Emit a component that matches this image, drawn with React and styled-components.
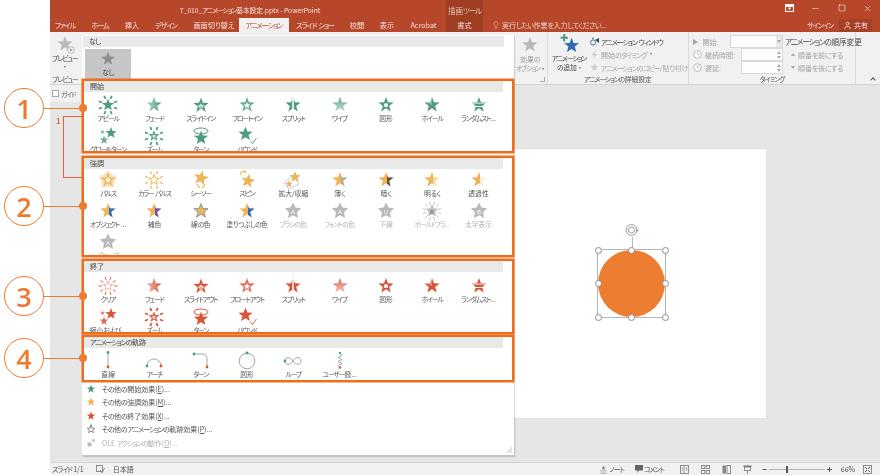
import React, { useId } from "react";
import styled, { createGlobalStyle } from "styled-components";
import { Lightbulb, User, X, Minus, Square } from "lucide-react";

const GlobalStyle = createGlobalStyle`
  html, body {
    margin: 0;
    padding: 0;
    background: #fff;
    overflow: hidden;
  }
  * {
    box-sizing: border-box;
  }
  body {
    font-family: "Noto Sans CJK JP", "Noto Sans", sans-serif;
    font-feature-settings: "palt";
  }
`;

const GREEN = "#4f9c82";
const YELLOW = "#edb557";
const RED = "#d9553a";
const BLUE = "#2f6db0";
const GREY = "#b9b9b9";
const ORANGE = "#ef6c1a";
const CALLOUT = "#ee7a2d";

const Page = styled.div`
  position: relative;
  width: 880px;
  height: 475px;
  overflow: hidden;
  padding-left: 50px;
  background: #fff;
  filter: blur(0.3px);
`;

const Window = styled.div`
  display: flex;
  flex-direction: column;
  width: 830px;
  height: 475px;
  background: #e6e6e6;
`;

/* the UI font in the screenshot has narrow kana */
const Kana = styled.span`
  letter-spacing: ${(p) => (p.$kata ? "-1.1px" : "-0.55px")};
`;

function T({ children }) {
  const parts = String(children).match(/[ァ-ヶー]+|[ぁ-ん]+|[^ァ-ヶーぁ-ん]+/g) || [];
  return parts.map((part, i) => {
    if (/^[ァ-ヶー]/.test(part)) return <Kana key={i} $kata>{part}</Kana>;
    if (/^[ぁ-ん]/.test(part)) return <Kana key={i}>{part}</Kana>;
    return part;
  });
}

/* title + tabs */
const Header = styled.div`
  background: #b7472a;
  color: #f5e4de;
  height: 32px;
  flex: none;
`;

const TitleRow = styled.div`
  display: flex;
  height: 18px;
`;

const Title = styled.div`
  width: 396px;
  padding: 1px 0 0 4px;
  text-align: center;
  font-size: 6.7px;
  line-height: 18px;
  white-space: nowrap;
`;

const ContextLabel = styled.div`
  width: 37px;
  background: #a03e24;
  color: #e9c4b8;
  font-size: 7.5px;
  line-height: 21px;
  text-align: center;
`;

const WindowButtons = styled.div`
  display: flex;
  margin-left: auto;
`;

const WindowButton = styled.div`
  display: flex;
  width: 26.5px;
  height: 16px;
  align-items: center;
  justify-content: center;
  &:last-child {
    width: 24.5px;
  }
`;

const TabRow = styled.div`
  display: flex;
  height: 14px;
  align-items: stretch;
`;

const Tab = styled.div`
  width: ${(p) => p.$w}px;
  font-size: 7.2px;
  line-height: 15px;
  text-align: center;
  white-space: nowrap;
  background: ${(p) => (p.$active ? "#f1f1f1" : p.$context ? "#a03e24" : "transparent")};
  color: ${(p) => (p.$active ? "#b7472a" : "#f5e4de")};
`;

const Hint = styled.div`
  display: flex;
  align-items: center;
  gap: 2px;
  padding-left: 9px;
  font-size: 7px;
  color: #ecd3ca;
  white-space: nowrap;
`;

const Account = styled.div`
  display: flex;
  align-items: center;
  margin-left: auto;
  padding-right: 8px;
  font-size: 7px;
`;

const SignIn = styled.span`
  margin-right: 6px;
`;

const Share = styled.div`
  display: flex;
  align-items: center;
  justify-content: center;
  gap: 2px;
  width: 33px;
  height: 13px;
  background: #a53f25;
`;

/* ribbon */
const Ribbon = styled.div`
  display: flex;
  flex: none;
  height: 53px;
  background: #f1f1f1;
  border-bottom: 1px solid #d2d2d2;
  color: #444;
`;

const Group = styled.div`
  position: relative;
  display: flex;
  flex-direction: column;
  flex: none;
  width: ${(p) => p.$w}px;
  border-right: ${(p) => (p.$plain ? "none" : "1px solid #dadada")};
`;

const GroupBody = styled.div`
  display: flex;
  flex: 1;
  min-height: 0;
  justify-content: ${(p) => p.$justify || "flex-start"};
`;

const GroupLabel = styled.div`
  flex: none;
  height: 9px;
  font-size: 6.8px;
  line-height: 9px;
  text-align: center;
  color: #555;
  white-space: nowrap;
`;

const Launcher = styled.div`
  position: absolute;
  right: 2px;
  bottom: 2px;
  width: 5px;
  height: 5px;
  border-right: 1px solid #aaa;
  border-bottom: 1px solid #aaa;
`;

const BigButton = styled.div`
  display: flex;
  flex-direction: column;
  align-items: center;
  width: ${(p) => p.$w}px;
  padding-top: ${(p) => p.$top || 3}px;
  font-size: 6.8px;
  line-height: 9px;
  text-align: center;
  white-space: nowrap;
  color: ${(p) => (p.$disabled ? "#9a9a9a" : "#444")};
`;

const Caret = styled.span`
  display: inline-block;
  width: 0;
  height: 0;
  margin: ${(p) => (p.$block ? "3px 0 0" : "0 0 1px 2px")};
  border-left: 1.5px solid transparent;
  border-right: 1.5px solid transparent;
  border-top: 2px solid #777;
`;

const CommandColumn = styled.div`
  display: flex;
  flex-direction: column;
  padding-top: 3px;
  padding-left: ${(p) => p.$left || 0}px;
  width: ${(p) => p.$w}px;
`;

const CommandRow = styled.div`
  display: flex;
  align-items: center;
  gap: 2px;
  height: 13px;
  font-size: ${(p) => p.$size || 7}px;
  white-space: nowrap;
  color: ${(p) => (p.$disabled ? "#a6a6a6" : "#444")};
`;

const OrderRow = styled(CommandRow)`
  padding-left: 6px;
  gap: 3px;
`;

const FieldLabel = styled.span`
  flex: 1;
  padding-left: 1px;
`;

const Field = styled.div`
  display: flex;
  justify-content: flex-end;
  align-items: center;
  flex: none;
  width: ${(p) => p.$w}px;
  height: 12.5px;
  background: #fdfdfd;
  border: 1px solid #d8d8d8;
`;

const FieldEnd = styled.div`
  display: flex;
  flex-direction: column;
  align-items: center;
  justify-content: center;
  gap: 2px;
  width: 6px;
  height: 100%;
  background: ${(p) => (p.$shade ? "#e8e8e8" : "transparent")};
`;

const Tri = styled.span`
  display: inline-block;
  flex: none;
  width: 0;
  height: 0;
  border-style: solid;
  border-color: transparent;
  ${(p) =>
    p.$dir === "up"
      ? "border-width: 0 2.5px 3px; border-bottom-color: #a9a9a9;"
      : p.$dir === "right"
        ? "border-width: 3px 0 3px 5px; border-left-color: #a9a9a9;"
        : "border-width: 3px 2.5px 0; border-top-color: #a9a9a9;"}
`;

const CollapseArrow = styled.div`
  margin-left: auto;
  margin-right: 5px;
  margin-top: 46px;
  width: 4px;
  height: 4px;
  border-left: 1px solid #555;
  border-top: 1px solid #555;
  transform: rotate(45deg);
`;

/* work area */
const Workspace = styled.div`
  display: flex;
  flex: 1;
  min-height: 0;
  padding-right: 114px;
`;

const Sidebar = styled.div`
  flex: none;
  width: 30px;
`;

const GuideBar = styled.div`
  display: flex;
  align-items: center;
  gap: 2px;
  height: 17px;
  padding-left: 2px;
  background: #f1f1f1;
  font-size: 6.8px;
  color: #666;
`;

const GuideBox = styled.span`
  width: 7px;
  height: 7px;
  background: #fff;
  border: 1px solid #a6a6a6;
`;

const ThumbNumber = styled.div`
  margin: 14px 0 0 6px;
  font-size: 8px;
  font-weight: 500;
  line-height: 9px;
  color: #e0512e;
`;

const Stage = styled.div`
  display: flex;
  flex: 1;
  justify-content: flex-end;
  padding-top: 64px;
`;

const Slide = styled.div`
  position: relative;
  width: 476px;
  height: 268.5px;
  background: #fff;
  box-shadow: 0 0 1px #bbb;
`;

const Selection = styled.div`
  position: absolute;
  left: 307px;
  top: 100px;
  width: 69px;
  height: 69px;
  border: 1px solid #b5b5b5;
`;

const Circle = styled.div`
  position: absolute;
  inset: 0;
  border-radius: 50%;
  background: #ed7d31;
`;

const Handle = styled.span`
  position: absolute;
  left: ${(p) => p.$x}%;
  top: ${(p) => p.$y}%;
  width: 7px;
  height: 7px;
  margin: -3.5px 0 0 -3.5px;
  border: 1px solid #8d8d8d;
  border-radius: 50%;
  background: #fff;
`;

const RotateLine = styled.span`
  position: absolute;
  left: 50%;
  top: -13px;
  width: 1px;
  height: 13px;
  background: #b5b5b5;
`;

const RotateIcon = styled.svg`
  position: absolute;
  left: 50%;
  top: -27px;
  margin-left: -7px;
`;

/* status bar */
const StatusBar = styled.div`
  display: flex;
  align-items: center;
  flex: none;
  height: 13px;
  padding-left: 2px;
  background: #f1f1f1;
  border-top: 1px solid #d2d2d2;
  font-size: 7px;
  color: #555;
`;

const StatusText = styled.span`
  margin-right: ${(p) => p.$mr || 0}px;
  white-space: nowrap;
`;

const StatusRight = styled.div`
  display: flex;
  align-items: center;
  margin-left: auto;
`;

const StatusIcon = styled.svg`
  flex: none;
  margin-right: ${(p) => p.$mr || 0}px;
`;

const ZoomTrack = styled.div`
  position: relative;
  width: 56px;
  height: 1px;
  margin: 0 2px;
  background: #b5b5b5;
`;

const ZoomThumb = styled.span`
  position: absolute;
  left: 17px;
  top: -3px;
  width: 2px;
  height: 7px;
  background: #555;
`;

/* gallery dropdown */
const Gallery = styled.div`
  position: absolute;
  left: 82px;
  top: 35px;
  width: 432px;
  height: 421px;
  padding: 1px 1px 0;
  background: #fff;
  border-bottom: 1px solid #c4c4c4;
  box-shadow: 1px 1px 1px rgba(0, 0, 0, 0.15);
`;

const SectionHead = styled.div`
  height: 11px;
  margin-right: 9px;
  padding-left: 6px;
  background: #e9e9e9;
  font-size: 7px;
  line-height: 11px;
  color: #444;
`;

const NoneBlock = styled.div`
  height: 44px;
  padding: 2px 1px 0 2px;
`;

const NoneCell = styled.div`
  display: flex;
  flex-direction: column;
  align-items: center;
  width: 46px;
  height: 32px;
  padding-top: 1px;
  background: #c6c6c6;
  font-size: 6.8px;
  line-height: 8px;
  color: #444;
`;

const Section = styled.div`
  position: relative;
  height: ${(p) => p.$h}px;
  margin: ${(p) => p.$mt}px -1px 0;
  border: 2px solid ${ORANGE};
  box-shadow: 0 0 0 0.5px ${ORANGE};
  overflow: hidden;
`;

const IconGrid = styled.div`
  display: grid;
  grid-template-columns: repeat(9, 46.3px);
  grid-auto-rows: 31px;
  padding-left: 1px;
  padding-top: ${(p) => p.$pad}px;
`;

const Cell = styled.div`
  display: flex;
  flex-direction: column;
  align-items: center;
  font-size: 6.8px;
  line-height: 9px;
  white-space: nowrap;
  color: ${(p) => (p.$disabled ? "#b3b3b3" : "#555")};
`;

const CellIcon = styled.svg`
  flex: none;
  display: block;
  margin-bottom: -1px;
`;

const MenuList = styled.div`
  display: flex;
  flex-direction: column;
`;

const MenuItem = styled.div`
  display: flex;
  align-items: center;
  height: 13.5px;
  padding-left: 3px;
  font-size: 7px;
  color: ${(p) => (p.$disabled ? "#b0b0b0" : "#555")};
  white-space: pre;
`;

const MenuIcon = styled.svg`
  flex: none;
  width: 10px;
  height: 10px;
  margin-right: 6px;
`;

const Key = styled.span`
  text-decoration: underline;
`;

const Grip = styled.svg`
  position: absolute;
  right: 2px;
  bottom: 2px;
`;

/* annotations */
const Callout = styled.div`
  position: absolute;
  left: 4px;
  top: ${(p) => p.$y - 20}px;
  display: flex;
  align-items: center;
`;

const CalloutBadge = styled.div`
  display: flex;
  align-items: center;
  justify-content: center;
  width: 40px;
  height: 40px;
  border: 1px solid ${CALLOUT};
  border-radius: 50%;
  background: #fff;
  color: ${CALLOUT};
  font-family: "Open Sans", sans-serif;
  font-size: 27px;
  font-weight: 600;
  line-height: 1;
`;

const Leader = styled.div`
  position: relative;
  width: 39px;
  height: 1px;
  background: ${CALLOUT};
`;

const LeaderDot = styled.span`
  position: absolute;
  right: -4px;
  top: -3.5px;
  width: 8px;
  height: 8px;
  border-radius: 50%;
  background: ${CALLOUT};
`;

const Bracket = styled.div`
  position: absolute;
  left: 63px;
  top: 116px;
  width: 19px;
  height: 62px;
  border: 1.5px solid #ee5f38;
  border-right: none;
`;

/* drawing helpers */
function starPts(cx, cy, R, ratio = 0.42) {
  const pts = [];
  for (let i = 0; i < 10; i++) {
    const rad = i % 2 === 0 ? R : R * ratio;
    const a = (-90 + i * 36) * (Math.PI / 180);
    pts.push(`${(cx + rad * Math.cos(a)).toFixed(2)},${(cy + rad * Math.sin(a)).toFixed(2)}`);
  }
  return pts.join(" ");
}

function rays(cx, cy, r1, r2, n, color, w = 1.2) {
  const out = [];
  for (let i = 0; i < n; i++) {
    const a = ((i * 360) / n - 90 + 180 / n) * (Math.PI / 180);
    out.push(
      <line
        key={i}
        x1={cx + r1 * Math.cos(a)}
        y1={cy + r1 * Math.sin(a)}
        x2={cx + r2 * Math.cos(a)}
        y2={cy + r2 * Math.sin(a)}
        stroke={color}
        strokeWidth={w}
      />
    );
  }
  return out;
}

function Icon({ kind, c, c2, letter }) {
  const id = useId();
  const grad = `url(#${id})`;
  let stops = null;
  let vertical = false;
  if (kind === "fade") stops = [[0, c, 0.4], [1, c, 1]];
  if (kind === "wipe") {
    stops = [[0, c, 0.9], [1, c, 0.35]];
    vertical = true;
  }
  if (kind === "half") stops = [[0, c, 1], [0.54, c, 1], [0.54, c2, 1], [1, c2, 1]];

  let body;
  switch (kind) {
    case "appeal":
      body = (
        <>
          <polygon points={starPts(10, 10, 6.5)} fill={c} />
          {rays(10, 10, 6.5, 9.8, 8, c, 1.7)}
        </>
      );
      break;
    case "clear":
      body = (
        <>
          <polygon points={starPts(10, 10, 5)} fill="#fff" stroke={c} strokeWidth="0.6" opacity="0.7" />
          {rays(10, 10, 6, 9.5, 10, c, 0.9)}
        </>
      );
      break;
    case "fade":
    case "wipe":
    case "half":
      body = <polygon points={starPts(10, 10, 8)} fill={grad} />;
      break;
    case "slide":
      body = (
        <>
          <polygon points={starPts(10, 10.5, 8)} fill={c} />
          <polygon points={starPts(10, 11.5, 3.6)} fill="#fff" />
          <path d="M8.3 14 L10 11 L11.7 14" fill="none" stroke={c} strokeWidth="0.7" />
        </>
      );
      break;
    case "float":
      body = (
        <>
          <polygon points={starPts(10, 10, 8)} fill={c} opacity="0.85" />
          <polygon points={starPts(10, 10.5, 3.6)} fill="#fff" />
        </>
      );
      break;
    case "split":
      body = (
        <>
          <polygon points={starPts(10, 10, 8)} fill={c} />
          <rect x="9" y="1" width="2" height="18" fill="#fff" opacity="0.75" />
        </>
      );
      break;
    case "shape":
      body = (
        <>
          <polygon points={starPts(10, 10, 8)} fill={c} />
          <rect x="8.2" y="8.4" width="3.6" height="3.4" fill="#fff" />
        </>
      );
      break;
    case "wheel":
      body = (
        <>
          <polygon points={starPts(10, 10, 8)} fill={c} />
          <polygon points="10,10 10,2 3,7" fill="#fff" opacity="0.3" />
        </>
      );
      break;
    case "random":
      body = (
        <>
          <polygon points={starPts(10, 10, 8)} fill={c} />
          <rect x="1" y="7.6" width="18" height="1" fill="#fff" opacity="0.85" />
          <rect x="1" y="11" width="18" height="1" fill="#fff" opacity="0.85" />
        </>
      );
      break;
    case "grow":
      body = (
        <>
          <polygon points={starPts(13, 7, 6)} fill={c} />
          <polygon points={starPts(6, 14, 4.5)} fill={c} opacity="0.85" />
          <polygon points={starPts(4.5, 6, 2.5)} fill={c} opacity="0.8" />
        </>
      );
      break;
    case "zoom":
      body = (
        <>
          <polygon points={starPts(10, 10, 5.8)} fill={c} />
          <polygon points={starPts(10, 10.3, 2.8)} fill="#fff" opacity="0.7" />
          {rays(10, 10, 6.5, 9.8, 8, c, 1.8)}
        </>
      );
      break;
    case "turn":
      body = (
        <>
          <polygon points={starPts(10, 12, 7.5)} fill={c} />
          <ellipse cx="10" cy="5" rx="7" ry="3" fill="none" stroke={c} strokeWidth="1" />
          <polygon points={starPts(10, 12, 5)} fill={c} />
        </>
      );
      break;
    case "bounce":
      body = (
        <>
          <polygon points={starPts(8.5, 8, 7.5)} fill={c} />
          <path d="M13.5 15 L15.5 17.5 L19.5 12" fill="none" stroke={c} strokeWidth="0.9" />
        </>
      );
      break;
    case "pulse":
      body = (
        <>
          <polygon points={starPts(10, 10, 9.5, 0.7)} fill={c} opacity="0.4" />
          <polygon points={starPts(10, 10, 7.5)} fill={c} />
          <polygon points={starPts(10, 10, 3.4)} fill="#fff" />
        </>
      );
      break;
    case "colorpulse":
      body = (
        <>
          <polygon points={starPts(10, 10, 5.5)} fill="#fff" stroke={c} strokeWidth="1" />
          {rays(10, 10, 6.5, 9.5, 8, c, 1.2)}
        </>
      );
      break;
    case "teeter":
      body = (
        <>
          <polygon points={starPts(10, 8, 8)} fill={c} transform="rotate(12 10 8)" />
          <path d="M6 14 Q7 17 9 18 M14 14 Q13 17 11 18" fill="none" stroke={c} strokeWidth="1.1" />
        </>
      );
      break;
    case "spin":
      body = (
        <>
          <polygon points={starPts(11, 11, 7.5)} fill={c} transform="rotate(10 11 11)" />
          <path d="M3 5 Q4 1 8 1" fill="none" stroke={c} strokeWidth="1.1" />
          <polygon points="7,0 10,2 7,3" fill={c} />
        </>
      );
      break;
    case "resize":
      body = (
        <>
          <path d="M1 13 L10 5 L16 14 L6 19 Z" fill="#fff" stroke="#999" strokeWidth="0.5" />
          <polygon points={starPts(12, 7, 6)} fill={c} />
          <polygon points={starPts(6, 14, 4)} fill={c} />
        </>
      );
      break;
    case "outline":
      body = <polygon points={starPts(10, 10, 7.5)} fill={c} stroke="#5d7f94" strokeWidth="0.7" />;
      break;
    case "text":
      body = (
        <>
          <polygon points={starPts(10, 10, 8.5, 0.5)} fill={GREY} />
          <text x="10" y="13" textAnchor="middle" fontSize="6" fill="#fff" fontFamily="Liberation Sans, sans-serif">
            {letter}
          </text>
        </>
      );
      break;
    case "flash":
      body = (
        <>
          {rays(10, 10, 6, 9.6, 12, "#c6c6c6", 1)}
          <polygon points={starPts(10, 10, 6.5, 0.55)} fill="#c4c4c4" />
          <text x="10" y="12.5" textAnchor="middle" fontSize="5.5" fontWeight="bold" fill="#777" fontFamily="Liberation Sans, sans-serif">
            B
          </text>
        </>
      );
      break;
    case "line":
      body = (
        <>
          <line x1="10" y1="1" x2="10" y2="16" stroke="#8f8f8f" strokeWidth="0.8" />
          <circle cx="10" cy="1.5" r="1.4" fill={GREEN} />
          <circle cx="10" cy="16" r="1.4" fill={RED} />
        </>
      );
      break;
    case "arch":
      body = (
        <>
          <path d="M3 15 A7 7 0 0 1 17 15" fill="none" stroke="#8f8f8f" strokeWidth="0.8" />
          <circle cx="3" cy="15" r="1.4" fill={GREEN} />
          <circle cx="17" cy="15" r="1.4" fill={RED} />
        </>
      );
      break;
    case "pathturn":
      body = (
        <>
          <path d="M3 3 H11 Q16 3 16 8 V16" fill="none" stroke="#8f8f8f" strokeWidth="0.8" />
          <circle cx="3" cy="3" r="1.4" fill={GREEN} />
          <circle cx="16" cy="16" r="1.4" fill={RED} />
        </>
      );
      break;
    case "ring":
      body = (
        <>
          <circle cx="10" cy="10" r="7.8" fill="none" stroke="#8f8f8f" strokeWidth="0.8" />
          <circle cx="10" cy="2" r="1.4" fill={GREEN} />
        </>
      );
      break;
    case "loop":
      body = (
        <>
          <path d="M10 10 C7 5 2 6 2 10 C2 14 7 15 10 10 C13 5 18 6 18 10 C18 14 13 15 10 10 Z" fill="none" stroke="#8f8f8f" strokeWidth="0.8" />
          <circle cx="2" cy="10" r="1.4" fill={GREEN} />
        </>
      );
      break;
    case "custom":
      body = (
        <>
          <path d="M10 2 L12 4.5 L8 6.5 L12 8.5 L8 10.5 L12 12.5 L8 14.5 L10 16.5" fill="none" stroke="#8f8f8f" strokeWidth="0.8" />
          <circle cx="10" cy="2" r="1.2" fill={GREEN} />
          <circle cx="10" cy="16.5" r="1.2" fill={RED} />
        </>
      );
      break;
    default:
      body = <polygon points={starPts(10, 10, 8)} fill={c} />;
  }

  return (
    <CellIcon width="20" height="20" viewBox="0 0 20 20">
      {stops && (
        <defs>
          <linearGradient id={id} x1="0" y1="0" x2={vertical ? 0 : 1} y2={vertical ? 1 : 0}>
            {stops.map(([o, col, op], i) => (
              <stop key={i} offset={o} stopColor={col} stopOpacity={op} />
            ))}
          </linearGradient>
        </defs>
      )}
      {body}
    </CellIcon>
  );
}

const entrance = [
  ["アピール", "appeal"],
  ["フェード", "fade"],
  ["スライドイン", "slide"],
  ["フロートイン", "float"],
  ["スプリット", "split"],
  ["ワイプ", "wipe"],
  ["図形", "shape"],
  ["ホイール", "wheel"],
  ["ランダムスト...", "random"],
  ["グロー&ターン", "grow"],
  ["ズーム", "zoom"],
  ["ターン", "turn"],
  ["バウンド", "bounce"],
];

const emphasis = [
  { label: "パルス", kind: "pulse", c: YELLOW },
  { label: "カラー パルス", kind: "colorpulse", c: YELLOW },
  { label: "シーソー", kind: "teeter", c: YELLOW },
  { label: "スピン", kind: "spin", c: YELLOW },
  { label: "拡大/収縮", kind: "resize", c: YELLOW },
  { label: "薄く", kind: "half", c: YELLOW, c2: "#b5ab9a" },
  { label: "暗く", kind: "half", c: YELLOW, c2: "#6b5236" },
  { label: "明るく", kind: "half", c: YELLOW, c2: "#f6d9a5" },
  { label: "透過性", kind: "half", c: YELLOW, c2: "#faecd2" },
  { label: "オブジェクト ...", kind: "half", c: YELLOW, c2: BLUE },
  { label: "補色", kind: "half", c: YELLOW, c2: "#7a4aa5" },
  { label: "線の色", kind: "outline", c: YELLOW },
  { label: "塗りつぶしの色", kind: "half", c: YELLOW, c2: BLUE },
  { label: "ブラシの色", kind: "text", letter: "A", off: true },
  { label: "フォントの色", kind: "text", letter: "A", off: true },
  { label: "下線", kind: "text", letter: "U", off: true },
  { label: "ボールドフラ...", kind: "flash", off: true },
  { label: "太字表示", kind: "text", letter: "B", off: true },
  { label: "ウェーブ", kind: "text", letter: "A", off: true },
];

const exit = [
  ["クリア", "clear"],
  ["フェード", "fade"],
  ["スライドアウト", "slide"],
  ["フロートアウト", "float"],
  ["スプリット", "split"],
  ["ワイプ", "wipe"],
  ["図形", "shape"],
  ["ホイール", "wheel"],
  ["ランダムスト...", "random"],
  ["縮小および...", "grow"],
  ["ズーム", "zoom"],
  ["ターン", "turn"],
  ["バウンド", "bounce"],
];

const motion = [
  ["直線", "line"],
  ["アーチ", "arch"],
  ["ターン", "pathturn"],
  ["図形", "ring"],
  ["ループ", "loop"],
  ["ユーザー設...", "custom"],
];

const tabs = [
  ["ファイル", 30],
  ["ホーム", 40],
  ["挿入", 24],
  ["デザイン", 44],
  ["画面切り替え", 51],
  ["アニメーション", 50, true],
  ["スライド ショー", 52],
  ["校閲", 32],
  ["表示", 28],
  ["Acrobat", 45],
];

const handles = [
  [0, 0],
  [50, 0],
  [100, 0],
  [0, 50],
  [100, 50],
  [0, 100],
  [50, 100],
  [100, 100],
];

function StarIcon({ size = 20, color = GREY, play, plus }) {
  return (
    <svg width={size} height={size} viewBox="0 0 20 20" style={{ flex: "none" }}>
      <polygon points={starPts(plus ? 12 : 10, plus ? 12 : 10, plus ? 7.5 : 8)} fill={color} />
      {play && (
        <>
          <circle cx="16" cy="16" r="3.4" fill="#f1f1f1" stroke="#999" strokeWidth="0.6" />
          <polygon points="15,14.4 15,17.6 17.6,16" fill="#999" />
        </>
      )}
      {plus && <path d="M5 1 V8 M1.5 4.5 H8.5" stroke={GREEN} strokeWidth="2" />}
    </svg>
  );
}

function ClockIcon() {
  return (
    <svg width="9" height="9" viewBox="0 0 9 9" style={{ flex: "none" }}>
      <circle cx="4.5" cy="4.5" r="3.8" fill="#fff" stroke="#a6a6a6" strokeWidth="0.8" />
      <path d="M4.5 2.2 V4.6 H6.6" fill="none" stroke="#a6a6a6" strokeWidth="0.7" />
    </svg>
  );
}

function SpinEnd() {
  return (
    <FieldEnd>
      <Tri $dir="up" />
      <Tri />
    </FieldEnd>
  );
}

function AnnotatedSection({ title, h, mt, pad, children }) {
  return (
    <Section $h={h} $mt={mt}>
      <SectionHead>
        <T>{title}</T>
      </SectionHead>
      <IconGrid $pad={pad}>{children}</IconGrid>
    </Section>
  );
}

export default function App() {
  return (
    <Page>
      <GlobalStyle />
      <Window>
        <Header>
          <TitleRow>
            <Title>
              <T>T_010_アニメーション基本設定.pptx - PowerPoint</T>
            </Title>
            <ContextLabel>
              <T>描画ツール</T>
            </ContextLabel>
            <WindowButtons>
              <WindowButton>
                <svg width="9" height="8" viewBox="0 0 9 8">
                  <rect x="0.5" y="0.5" width="8" height="7" fill="none" stroke="#fff" />
                  <rect x="1" y="1" width="7" height="2" fill="#fff" />
                  <rect x="3.5" y="3.5" width="2" height="2" fill="#fff" />
                </svg>
              </WindowButton>
              <WindowButton>
                <Minus size={9} color="#fff" strokeWidth={1.5} />
              </WindowButton>
              <WindowButton>
                <Square size={8} color="#fff" strokeWidth={1.5} />
              </WindowButton>
              <WindowButton>
                <X size={9} color="#fff" strokeWidth={1.5} />
              </WindowButton>
            </WindowButtons>
          </TitleRow>
          <TabRow>
            {tabs.map(([label, w, active]) => (
              <Tab key={label} $w={w} $active={active}>
                <T>{label}</T>
              </Tab>
            ))}
            <Tab $w={37} $context>
              書式
            </Tab>
            <Hint>
              <Lightbulb size={8} strokeWidth={1.5} />
              <span>
                <T>実行したい作業を入力してください...</T>
              </span>
            </Hint>
            <Account>
              <SignIn>
                <T>サインイン</T>
              </SignIn>
              <Share>
                <User size={9} strokeWidth={2} />
                共有
              </Share>
            </Account>
          </TabRow>
        </Header>

        <Ribbon>
          <Group $w={30} $plain>
            <GroupBody $justify="center">
              <BigButton $w={30} $top={2}>
                <StarIcon play />
                <span>
                  <T>プレビュー</T>
                </span>
                <Caret $block />
              </BigButton>
            </GroupBody>
            <GroupLabel>
              <T>プレビュー</T>
            </GroupLabel>
          </Group>
          <Group $w={468}>
            <GroupBody $justify="flex-end">
              <BigButton $w={34} $disabled>
                <StarIcon />
                <span>
                  <T>効果の</T>
                </span>
                <span>
                  <T>オプション</T>
                  <Caret />
                </span>
              </BigButton>
            </GroupBody>
            <GroupLabel />
            <Launcher />
          </Group>
          <Group $w={141}>
            <GroupBody>
              <BigButton $w={42} $top={1}>
                <StarIcon size={21} color={BLUE} plus />
                <span>
                  <T>アニメーション</T>
                </span>
                <span>
                  <T>の追加</T>
                  <Caret />
                </span>
              </BigButton>
              <CommandColumn $w={98}>
                <CommandRow>
                  <svg width="9" height="9" viewBox="0 0 9 9">
                    <circle cx="3" cy="5.5" r="2.6" fill="none" stroke={BLUE} strokeWidth="0.9" />
                    <polygon points="5,3 9,1 9,6" fill="#444" />
                    <circle cx="3" cy="1.4" r="1" fill={GREEN} />
                  </svg>
                  <span>
                    <T>アニメーション ウィンドウ</T>
                  </span>
                </CommandRow>
                <CommandRow $disabled>
                  <svg width="9" height="9" viewBox="0 0 9 9">
                    <path d="M6 0 L2 5 H4.5 L3 9 L7 4 H4.5 Z" fill="#c8c8c8" />
                  </svg>
                  <span>
                    <T>開始のタイミング</T>
                  </span>
                  <Caret />
                </CommandRow>
                <CommandRow $disabled>
                  <svg width="9" height="9" viewBox="0 0 9 9">
                    <polygon points={starPts(4.5, 4.5, 4)} fill="#c8c8c8" />
                  </svg>
                  <span>
                    <T>アニメーションのコピー/貼り付け</T>
                  </span>
                </CommandRow>
              </CommandColumn>
            </GroupBody>
            <GroupLabel>
              <T>アニメーションの詳細設定</T>
            </GroupLabel>
          </Group>
          <Group $w={167}>
            <GroupBody>
              <CommandColumn $w={94} $left={4}>
                <CommandRow $disabled>
                  <Tri $dir="right" />
                  <FieldLabel>&nbsp;開始:</FieldLabel>
                  <Field $w={53}>
                    <FieldEnd $shade>
                      <Tri />
                    </FieldEnd>
                  </Field>
                </CommandRow>
                <CommandRow $disabled>
                  <ClockIcon />
                  <FieldLabel>継続時間:</FieldLabel>
                  <Field $w={42}>
                    <SpinEnd />
                  </Field>
                </CommandRow>
                <CommandRow $disabled>
                  <ClockIcon />
                  <FieldLabel>遅延:</FieldLabel>
                  <Field $w={42}>
                    <SpinEnd />
                  </Field>
                </CommandRow>
              </CommandColumn>
              <CommandColumn $w={72} $left={2}>
                <CommandRow $size={7.6}>
                  <span>
                    <T>アニメーションの順序変更</T>
                  </span>
                </CommandRow>
                <OrderRow $disabled>
                  <Tri $dir="up" />
                  <span>
                    <T>順番を前にする</T>
                  </span>
                </OrderRow>
                <OrderRow $disabled>
                  <Tri />
                  <span>
                    <T>順番を後にする</T>
                  </span>
                </OrderRow>
              </CommandColumn>
            </GroupBody>
            <GroupLabel>
              <T>タイミング</T>
            </GroupLabel>
          </Group>
          <CollapseArrow />
        </Ribbon>

        <Workspace>
          <Sidebar>
            <GuideBar>
              <GuideBox />
              <span>
                <T>ガイド</T>
              </span>
            </GuideBar>
            <ThumbNumber>1</ThumbNumber>
          </Sidebar>
          <Stage>
            <Slide>
              <Selection>
                <Circle />
                <RotateLine />
                <RotateIcon width="14" height="14" viewBox="0 0 14 14">
                  <circle cx="6.5" cy="7" r="5.4" fill="none" stroke="#9a9a9a" strokeWidth="1" />
                  <circle cx="6.5" cy="7" r="3" fill="none" stroke="#9a9a9a" strokeWidth="1" />
                  <path d="M10.5 7 L14 6.5 L12 9 Z" fill="#9a9a9a" />
                </RotateIcon>
                {handles.map(([x, y]) => (
                  <Handle key={`${x}-${y}`} $x={x} $y={y} />
                ))}
              </Selection>
            </Slide>
          </Stage>
        </Workspace>

        <StatusBar>
          <StatusText $mr={12}>
            <T>スライド 1/1</T>
          </StatusText>
          <StatusIcon width="9" height="9" viewBox="0 0 9 9" $mr={8}>
            <rect x="0.5" y="0.5" width="6" height="6" fill="none" stroke="#777" strokeWidth="0.8" />
            <path d="M4 5 L6 8 L8.5 3" fill="none" stroke="#777" strokeWidth="0.8" />
          </StatusIcon>
          <StatusText>日本語</StatusText>
          <StatusRight>
            <StatusIcon width="7" height="9" viewBox="0 0 7 9" $mr={2}>
              <path d="M3.5 1 L5 4 H2 Z M0.5 5.5 H6.5 M0.5 7 H6.5 M0.5 8.5 H6.5" fill="#888" stroke="#888" strokeWidth="0.5" />
            </StatusIcon>
            <StatusText $mr={11}>
              <T>ノート</T>
            </StatusText>
            <StatusIcon width="8" height="8" viewBox="0 0 8 8" $mr={1}>
              <path d="M0 0 H8 V5.5 H4 L2.5 8 V5.5 H0 Z" fill="#666" />
            </StatusIcon>
            <StatusText $mr={16}>
              <T>コメント</T>
            </StatusText>
            <StatusIcon width="9" height="9" viewBox="0 0 9 9" $mr={12}>
              <rect x="0.5" y="0.5" width="8" height="8" fill="none" stroke="#777" strokeWidth="0.8" />
              <path d="M4 0.5 V8.5 M1.5 3 H3 M1.5 5 H3 M5.5 3 H7.5 M5.5 5 H7.5" stroke="#777" strokeWidth="0.7" />
            </StatusIcon>
            <StatusIcon width="9" height="9" viewBox="0 0 9 9" $mr={12}>
              <rect x="0.4" y="0.5" width="3.5" height="3" fill="none" stroke="#777" strokeWidth="0.8" />
              <rect x="5.1" y="0.5" width="3.5" height="3" fill="none" stroke="#777" strokeWidth="0.8" />
              <rect x="0.4" y="5.5" width="3.5" height="3" fill="none" stroke="#777" strokeWidth="0.8" />
              <rect x="5.1" y="5.5" width="3.5" height="3" fill="none" stroke="#777" strokeWidth="0.8" />
            </StatusIcon>
            <StatusIcon width="9" height="9" viewBox="0 0 9 9" $mr={12}>
              <rect x="0.4" y="0.5" width="3.6" height="8" fill="#888" />
              <rect x="5" y="0.5" width="3.6" height="8" fill="none" stroke="#777" strokeWidth="0.8" />
            </StatusIcon>
            <StatusIcon width="9" height="9" viewBox="0 0 9 9" $mr={10}>
              <rect x="0.5" y="0.5" width="8" height="1.5" fill="#777" />
              <rect x="1.5" y="2" width="6" height="3.5" fill="none" stroke="#777" strokeWidth="0.8" />
              <path d="M4.5 5.5 V9" stroke="#777" strokeWidth="0.8" />
            </StatusIcon>
            <StatusIcon width="5" height="5" viewBox="0 0 5 5">
              <path d="M0.5 2.5 H4.5" stroke="#555" strokeWidth="1" />
            </StatusIcon>
            <ZoomTrack>
              <ZoomThumb />
            </ZoomTrack>
            <StatusIcon width="5" height="5" viewBox="0 0 5 5" $mr={9}>
              <path d="M0 2.5 H5 M2.5 0 V5" stroke="#555" strokeWidth="1" />
            </StatusIcon>
            <StatusText $mr={8}>66%</StatusText>
            <StatusIcon width="9" height="9" viewBox="0 0 9 9" $mr={8}>
              <rect x="0.5" y="0.5" width="8" height="8" fill="none" stroke="#777" strokeWidth="0.8" />
              <path d="M2 2 L4 4 M7 2 L5 4 M2 7 L4 5 M7 7 L5 5" stroke="#555" strokeWidth="1" />
            </StatusIcon>
          </StatusRight>
        </StatusBar>
      </Window>

      <Gallery>
        <SectionHead>
          <T>なし</T>
        </SectionHead>
        <NoneBlock>
          <NoneCell>
            <StarIcon size={18} color="#8e8e8e" />
            <span>
              <T>なし</T>
            </span>
          </NoneCell>
        </NoneBlock>

        <AnnotatedSection title="開始" h={74} mt={-12} pad={3}>
          {entrance.map(([label, kind]) => (
            <Cell key={label}>
              <Icon kind={kind} c={GREEN} />
              <span>
                <T>{label}</T>
              </span>
            </Cell>
          ))}
        </AnnotatedSection>

        <AnnotatedSection title="強調" h={101} mt={3} pad={1}>
          {emphasis.map((item) => (
            <Cell key={item.label} $disabled={item.off}>
              <Icon kind={item.kind} c={item.c} c2={item.c2} letter={item.letter} />
              <span>
                <T>{item.label}</T>
              </span>
            </Cell>
          ))}
        </AnnotatedSection>

        <AnnotatedSection title="終了" h={75} mt={2} pad={4}>
          {exit.map(([label, kind]) => (
            <Cell key={label}>
              <Icon kind={kind} c={RED} />
              <span>
                <T>{label}</T>
              </span>
            </Cell>
          ))}
        </AnnotatedSection>

        <AnnotatedSection title="アニメーションの軌跡" h={47} mt={1} pad={3}>
          {motion.map(([label, kind]) => (
            <Cell key={label}>
              <Icon kind={kind} />
              <span>
                <T>{label}</T>
              </span>
            </Cell>
          ))}
        </AnnotatedSection>

        <MenuList>
          <MenuItem>
            <MenuIcon viewBox="0 0 20 20">
              <polygon points={starPts(10, 10, 9)} fill={GREEN} />
            </MenuIcon>
            <span>
              <T>その他の開始効果(</T>
              <Key>E</Key>)...
            </span>
          </MenuItem>
          <MenuItem>
            <MenuIcon viewBox="0 0 20 20">
              <polygon points={starPts(10, 10, 9)} fill={YELLOW} />
            </MenuIcon>
            <span>
              <T>その他の強調効果(</T>
              <Key>M</Key>)...
            </span>
          </MenuItem>
          <MenuItem>
            <MenuIcon viewBox="0 0 20 20">
              <polygon points={starPts(10, 10, 9)} fill={RED} />
            </MenuIcon>
            <span>
              <T>その他の終了効果(</T>
              <Key>X</Key>)...
            </span>
          </MenuItem>
          <MenuItem>
            <MenuIcon viewBox="0 0 20 20">
              <polygon points={starPts(10, 11, 8)} fill="#fff" stroke="#666" strokeWidth="1.4" />
              <circle cx="10" cy="3" r="2" fill={GREEN} />
            </MenuIcon>
            <span>
              <T>その他のアニメーションの軌跡効果(</T>
              <Key>P</Key>)...
            </span>
          </MenuItem>
          <MenuItem $disabled>
            <MenuIcon viewBox="0 0 20 20">
              <circle cx="7" cy="13" r="4.5" fill="#bbb" />
              <circle cx="15" cy="5" r="3.5" fill="#ccc" />
            </MenuIcon>
            <span>
              <T>OLE アクションの動作(</T>
              <Key>O</Key>)...
            </span>
          </MenuItem>
        </MenuList>
        <Grip width="6" height="6" viewBox="0 0 6 6">
          <path d="M4.5 0.5 h1 v1 h-1 z M2.5 2.5 h1 v1 h-1 z M4.5 2.5 h1 v1 h-1 z M0.5 4.5 h1 v1 h-1 z M2.5 4.5 h1 v1 h-1 z M4.5 4.5 h1 v1 h-1 z" fill="#999" />
        </Grip>
      </Gallery>

      <Bracket />

      {[
        [1, 108],
        [2, 206],
        [3, 296],
        [4, 358],
      ].map(([n, y]) => (
        <Callout key={n} $y={y}>
          <CalloutBadge>{n}</CalloutBadge>
          <Leader>
            <LeaderDot />
          </Leader>
        </Callout>
      ))}
    </Page>
  );
}
